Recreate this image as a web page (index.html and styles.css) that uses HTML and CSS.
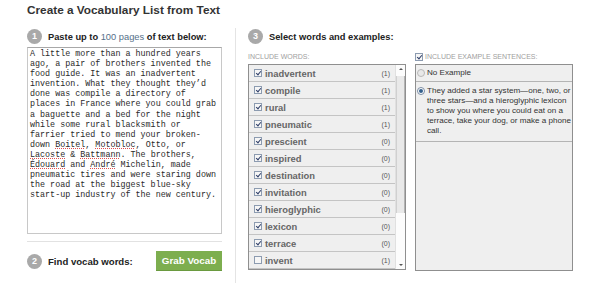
FILE: index.html
```html
<!DOCTYPE html>
<html>
<head>
<meta charset="utf-8">
<link rel="stylesheet" href="styles.css">
</head>
<body>
<div class="page">
  <h1 class="title">Create a Vocabulary List from Text</h1>
  <div class="cols">
    <div class="left">
      <div class="step">
        <span class="num">1</span>
        <span class="label">Paste up to <span class="hl">100 pages</span> of text below:</span>
      </div>
      <div class="textbox">A little more than a hundred years<br>ago, a pair of brothers invented the<br>food guide. It was an inadvertent<br>invention. What they thought they’d<br>done was compile a directory of<br>places in France where you could grab<br>a baguette and a bed for the night<br>while some rural blacksmith or<br>farrier tried to mend your broken-<br>down <span class="sp">Boitel</span>, <span class="sp">Motobloc</span>, Otto, or<br><span class="sp">Lacoste</span> &amp; <span class="sp">Battmann</span>. The brothers,<br><span class="sp">Édouard</span> and <span class="sp">André</span> Michelin, made<br>pneumatic tires and were staring down<br>the road at the biggest blue-sky<br>start-up industry of the new century.</div>
      <div class="sep"></div>
      <div class="find">
        <span class="num">2</span>
        <span class="label">Find vocab words:</span>
        <button class="grab">Grab Vocab</button>
      </div>
    </div>
    <div class="divider"></div>
    <div class="right">
      <div class="step">
        <span class="num">3</span>
        <span class="label">Select words and examples:</span>
      </div>
      <div class="lists">
        <div class="col">
          <div class="caption">INCLUDE WORDS:</div>
          <div class="wordbox">
            <div class="rows">
              <div class="row"><span class="cb on"></span><span class="word">inadvertent</span><span class="cnt">(1)</span></div>
              <div class="row"><span class="cb on"></span><span class="word">compile</span><span class="cnt">(1)</span></div>
              <div class="row"><span class="cb on"></span><span class="word">rural</span><span class="cnt">(1)</span></div>
              <div class="row"><span class="cb on"></span><span class="word">pneumatic</span><span class="cnt">(1)</span></div>
              <div class="row"><span class="cb on"></span><span class="word">prescient</span><span class="cnt">(0)</span></div>
              <div class="row"><span class="cb on"></span><span class="word">inspired</span><span class="cnt">(0)</span></div>
              <div class="row"><span class="cb on"></span><span class="word">destination</span><span class="cnt">(0)</span></div>
              <div class="row"><span class="cb on"></span><span class="word">invitation</span><span class="cnt">(0)</span></div>
              <div class="row"><span class="cb on"></span><span class="word">hieroglyphic</span><span class="cnt">(0)</span></div>
              <div class="row"><span class="cb on"></span><span class="word">lexicon</span><span class="cnt">(0)</span></div>
              <div class="row"><span class="cb on"></span><span class="word">terrace</span><span class="cnt">(0)</span></div>
              <div class="row"><span class="cb"></span><span class="word">invent</span><span class="cnt">(1)</span></div>
            </div>
            <div class="scroll">
              <span class="arrow up"></span>
              <div class="track"><div class="thumb"></div></div>
              <span class="arrow down"></span>
            </div>
          </div>
        </div>
        <div class="col">
          <div class="caption"><span class="cb on small"></span>INCLUDE EXAMPLE SENTENCES:</div>
          <div class="exbox">
            <div class="exrow"><span class="radio"></span><span class="extext">No Example</span></div>
            <div class="exrow"><span class="radio sel"></span><span class="extext">They added a star system—one, two, or<br>three stars—and a hieroglyphic lexicon<br>to show you where you could eat on a<br>terrace, take your dog, or make a phone<br>call.</span></div>
          </div>
        </div>
      </div>
    </div>
  </div>
</div>
</body>
</html>
```
FILE: styles.css
```css
html, body {
  margin: 0;
  padding: 0;
  background: #fff;
}
body {
  font-family: "Liberation Sans", Arial, sans-serif;
  color: #333;
}
.page {
  padding: 3px 0 0 27px;
}
.title {
  margin: 0;
  font-size: 11.8px;
  line-height: 14px;
  font-weight: bold;
  color: #333;
}
.cols {
  display: flex;
  margin-top: 11px;
  height: 255px;
}
.left {
  width: 195px;
  display: flex;
  flex-direction: column;
}
.step {
  display: flex;
  align-items: center;
  height: 15px;
  margin-top: 1px;
}
.num {
  width: 15px;
  height: 15px;
  border-radius: 50%;
  background: #a9a9a9;
  color: #fff;
  font-size: 9px;
  font-weight: bold;
  line-height: 15px;
  text-align: center;
  flex: none;
}
.label {
  margin-left: 6px;
  font-size: 9.3px;
  font-weight: bold;
  color: #222;
}
.hl {
  color: #56708a;
  font-weight: normal;
}
.textbox {
  margin-top: 3px;
  height: 184px;
  border: 1px solid #c8c8c8;
  border-top-color: #a8a8a8;
  padding: 1px 0 0 2px;
  font-family: "Liberation Mono", "Courier New", monospace;
  font-size: 8.4px;
  line-height: 10.1px;
  color: #2a2a2a;
  white-space: nowrap;
}
.sp {
  text-decoration: underline dotted #e05050;
  text-decoration-thickness: 1px;
  text-underline-offset: 1px;
}
.sep {
  margin-top: 7px;
  height: 1px;
  background: #e2e2e2;
}
.find {
  margin-top: 9px;
  display: flex;
  align-items: center;
  height: 20px;
}
.find .label {
  flex: 1;
  font-size: 9.6px;
}
.grab {
  width: 66px;
  height: 20px;
  border: none;
  border-bottom: 1px solid #6a9a3f;
  background: #7dae4f;
  color: #fff;
  font-family: "Liberation Sans", Arial, sans-serif;
  font-size: 9.8px;
  font-weight: bold;
  padding: 0;
}
.divider {
  width: 1px;
  background: #e4e4e4;
  margin-left: 13px;
}
.right {
  margin-left: 12px;
  width: 326px;
}
.lists {
  display: flex;
  gap: 9px;
  margin-top: 8px;
}
.col {
  width: 158px;
}
.caption {
  display: flex;
  align-items: center;
  font-size: 7px;
  color: #a0a0a0;
  height: 9px;
  margin-bottom: 3px;
}
.wordbox {
  display: flex;
  border: 1px solid #8f8f8f;
  height: 204px;
  background: #fff;
}
.rows {
  flex: 1;
}
.row {
  display: flex;
  align-items: center;
  height: 16px;
  border-bottom: 1px solid #c4c4c4;
  background: #efefef;
  padding-left: 5px;
  padding-right: 5px;
}
.cb {
  width: 6px;
  height: 6px;
  border: 1px solid #8c9bb0;
  background: #f6f6f6;
  position: relative;
  flex: none;
}
.cb.on::after {
  content: "";
  position: absolute;
  left: 1.5px;
  top: 0px;
  width: 2px;
  height: 4px;
  border: solid #30406a;
  border-width: 0 1px 1px 0;
  transform: rotate(40deg);
}
.word {
  flex: 1;
  margin-left: 3px;
  font-size: 9.4px;
  font-weight: bold;
  color: #666;
}
.cnt {
  font-size: 7px;
  color: #555;
}
.scroll {
  width: 9px;
  display: flex;
  flex-direction: column;
  align-items: center;
  background: #fcfcfc;
  border-left: 1px solid #e0e0e0;
}
.arrow {
  width: 0;
  height: 0;
  border-left: 2px solid transparent;
  border-right: 2px solid transparent;
  margin: 3px 0;
}
.arrow.up {
  border-bottom: 2px solid #555;
}
.arrow.down {
  border-top: 2px solid #555;
}
.track {
  flex: 1;
  width: 100%;
}
.thumb {
  margin-top: 3px;
  height: 137px;
  background: #e9e9e9;
  border-left: 1px solid #d0d0d0;
  border-right: 1px solid #b4b4b4;
}
.small {
  margin-right: 2px;
}
.exbox {
  border: 1px solid #8f8f8f;
  height: 205px;
  background: #efefef;
}
.exrow {
  display: flex;
  align-items: flex-start;
  border-bottom: 1px solid #b4b4b4;
  padding: 4px 0 5px 1px;
}
.exrow:first-child {
  padding: 3px 0 3px 1px;
}
.radio {
  width: 6px;
  height: 6px;
  border: 1px solid #b8b8b8;
  border-radius: 50%;
  background: #e8e8e8;
  flex: none;
  margin-top: 1px;
  position: relative;
}
.radio.sel {
  border-color: #7a8ca4;
  background: #fff;
}
.radio.sel::after {
  content: "";
  position: absolute;
  left: 1px;
  top: 1px;
  width: 4px;
  height: 4px;
  border-radius: 50%;
  background: #34608c;
}
.extext {
  margin-left: 2px;
  font-size: 8.1px;
  line-height: 10px;
  color: #333;
  white-space: nowrap;
}
```
